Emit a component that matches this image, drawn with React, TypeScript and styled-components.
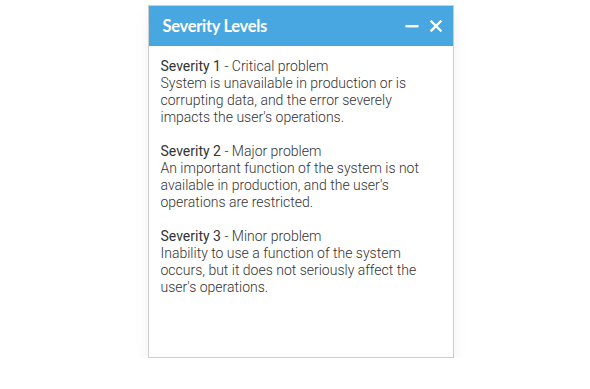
import React from "react";
import styled, { createGlobalStyle } from "styled-components";

const levels = [
    {
        name: "Severity 1",
        label: "Critical problem",
        text: "System is unavailable in production or is corrupting data, and the error severely impacts the user's operations.",
    },
    {
        name: "Severity 2",
        label: "Major problem",
        text: "An important function of the system is not available in production, and the user's operations are restricted.",
    },
    {
        name: "Severity 3",
        label: "Minor problem",
        text: "Inability to use a function of the system occurs, but it does not seriously affect the user's operations.",
    },
];

export default function App() {
    return (
        <>
            <GlobalStyle />
            <Page>
                <Panel>
                    <Header>
                        <Title>Severity Levels</Title>
                        <Actions>
                            <IconButton aria-label="minimize">
                                <svg width="14" height="14" viewBox="0 0 14 14">
                                    <rect x="0.5" y="6" width="13" height="2.4" fill="#fff" />
                                </svg>
                            </IconButton>
                            <IconButton aria-label="close">
                                <svg width="12" height="12" viewBox="0 0 12 12">
                                    <path
                                        d="M1.5 1.5 L10.5 10.5 M10.5 1.5 L1.5 10.5"
                                        stroke="#fff"
                                        strokeWidth="2.4"
                                        strokeLinecap="square"
                                    />
                                </svg>
                            </IconButton>
                        </Actions>
                    </Header>
                    <Body>
                        {levels.map((level) => (
                            <Level key={level.name}>
                                <Heading>
                                    <Name>{level.name}</Name> - {level.label}
                                </Heading>
                                <Description>{level.text}</Description>
                            </Level>
                        ))}
                    </Body>
                </Panel>
            </Page>
        </>
    );
}

const GlobalStyle = createGlobalStyle`
    html, body {
        margin: 0;
        padding: 0;
        background: #fff;
    }
`;

const Page = styled.div`
    display: flex;
    justify-content: center;
    padding: 5px 0 0 11px;
`;

const Panel = styled.div`
    width: 304px;
    height: 351px;
    border: 1px solid #cdcdcd;
    background: #fff;
    box-shadow: 0 6px 14px rgba(0, 0, 0, 0.06);
    display: flex;
    flex-direction: column;
`;

const Header = styled.div`
    height: 40px;
    background: #48a6e0;
    display: flex;
    align-items: center;
    justify-content: space-between;
    padding: 0 9px 0 14px;
`;

const Title = styled.div`
    font-family: Lato, "Open Sans", sans-serif;
    font-weight: 700;
    font-size: 16.5px;
    letter-spacing: -0.3px;
    color: #fff;
`;

const Actions = styled.div`
    display: flex;
    align-items: center;
    gap: 8px;
`;

const IconButton = styled.span`
    width: 16px;
    height: 16px;
    display: flex;
    align-items: center;
    justify-content: center;
`;

const Body = styled.div`
    padding: 12px 12px;
    font-family: Roboto, "Liberation Sans", sans-serif;
    font-size: 14px;
    line-height: 17px;
    color: #333;
`;

const Level = styled.div`
    margin-bottom: 17px;
`;

const Heading = styled.div`
    font-weight: 300;
`;

const Name = styled.span`
    font-weight: 400;
    color: #333;
`;

const Description = styled.div`
    font-weight: 300;
`;
